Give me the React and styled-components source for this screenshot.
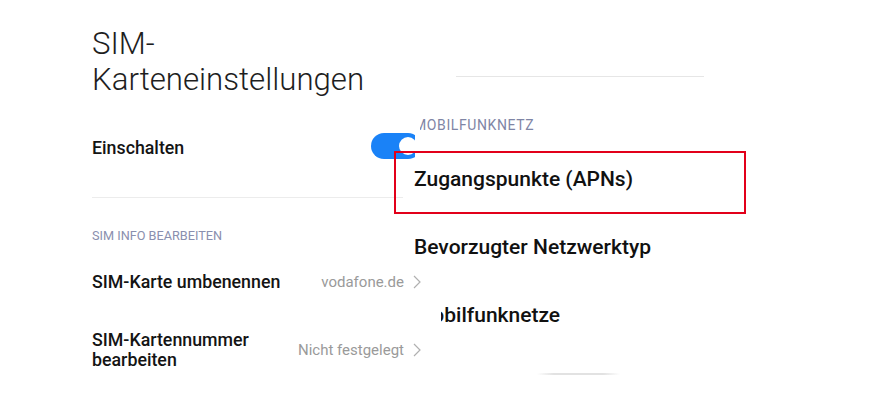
import React from "react";
import styled, { createGlobalStyle } from "styled-components";

const Global = createGlobalStyle`
  html, body { margin: 0; padding: 0; background: #fff; }
  body { font-family: Roboto, "Noto Sans", Arial, sans-serif; -webkit-font-smoothing: antialiased; }
  #root { width: 879px; height: 400px; }
`;

const Stage = styled.div`
  position: relative;
  width: 879px;
  height: 400px;
  overflow: hidden;
  background: #fff;
`;

const LeftScreen = styled.section`
  width: 329px;
  padding-left: 92px;
  display: flex;
  flex-direction: column;
`;

const Title = styled.h1`
  margin: 0;
  padding-top: 26px;
  font-size: 31.2px;
  line-height: 36px;
  font-weight: 300;
  color: #1e1e1e;
`;

const Row = styled.div`
  display: flex;
  align-items: center;
  justify-content: space-between;
  min-height: ${(p) => p.$h || 68}px;
  margin-top: ${(p) => p.$mt || 0}px;
`;

const Label = styled.div`
  font-size: 17.8px;
  line-height: 20px;
  font-weight: 500;
  color: #141414;
  padding-top: ${(p) => p.$pt || 0}px;
`;

const Toggle = styled.div`
  width: 50px;
  height: 26px;
  border-radius: 13px;
  background: #1a82f7;
  display: flex;
  align-items: center;
  justify-content: flex-end;
  padding: 0 4px;
  box-sizing: border-box;
`;

const Knob = styled.div`
  width: 18px;
  height: 18px;
  border-radius: 50%;
  background: #fff;
`;

const Divider = styled.div`
  height: 1px;
  background: #ececec;
  margin-top: ${(p) => p.$mt || 0}px;
`;

const SectionHead = styled.div`
  font-size: ${(p) => p.$fs || 12.7}px;
  line-height: 16px;
  color: ${(p) => p.$color || "#8a8fae"};
  margin-top: ${(p) => p.$mt || 0}px;
  margin-bottom: ${(p) => p.$mb || 0}px;
  letter-spacing: ${(p) => p.$ls || 0}px;
`;

const Value = styled.div`
  display: flex;
  align-items: center;
  gap: 9px;
  font-size: 15px;
  color: #9a9a9a;
  white-space: nowrap;
`;

const Chevron = () => (
  <svg width="8" height="14" viewBox="0 0 8 14" fill="none">
    <polyline points="1,1 7,7 1,13" stroke="#b0b0b0" strokeWidth="1.2" />
  </svg>
);

const Overlay = styled.section`
  position: absolute;
  left: 403px;
  top: 60px;
  width: 476px;
  height: 340px;
  background: #fff;
  clip-path: polygon(
    17px 0, 17px 71px, 12px 73px, 12px 105px, 0 125px, 0 150px,
    8px 165px, 8px 210px, 38px 220px, 38px 340px, 476px 340px, 476px 0
  );
  display: flex;
  flex-direction: column;
  padding-left: 11px;
  box-sizing: border-box;
`;

const TopLine = styled.div`
  width: 248px;
  height: 1px;
  margin: 16px 0 0 42px;
  background: #e6e6e6;
`;

const Item = styled.div`
  display: flex;
  align-items: center;
  min-height: 68px;
  font-size: 21px;
  line-height: 24px;
  font-weight: 500;
  color: #111;
  white-space: nowrap;
`;

const FadeLine = styled.div`
  width: 83px;
  height: 2px;
  margin: 24px 0 0 123px;
  background: linear-gradient(90deg, rgba(220,220,220,0), #e2e2e2 20%, #e2e2e2 80%, rgba(220,220,220,0));
  filter: blur(0.4px);
`;

const Highlight = styled.div`
  position: absolute;
  left: 394px;
  top: 151px;
  width: 352px;
  height: 63px;
  box-sizing: border-box;
  border: 2px solid #e2001a;
  pointer-events: none;
`;

export default function App() {
  return (
    <>
      <Global />
      <Stage>
        <LeftScreen>
          <Title>
            SIM-
            <br />
            Karteneinstellungen
          </Title>
          <Row $h={52} $mt={22}>
            <Label $pt={4}>Einschalten</Label>
            <Toggle>
              <Knob />
            </Toggle>
          </Row>
          <Divider $mt={25} />
          <SectionHead $mt={30}>SIM INFO BEARBEITEN</SectionHead>
          <Row $mt={4}>
            <Label>SIM-Karte umbenennen</Label>
            <Value>
              vodafone.de
              <Chevron />
            </Value>
          </Row>
          <Row>
            <Label>
              SIM-Kartennummer
              <br />
              bearbeiten
            </Label>
            <Value>
              Nicht festgelegt
              <Chevron />
            </Value>
          </Row>
        </LeftScreen>
        <Overlay>
          <TopLine />
          <SectionHead $mt={40} $mb={12} $ls={0.6} $fs={14} $color="#7f85a5">
            MOBILFUNKNETZ
          </SectionHead>
          <Item>Zugangspunkte (APNs)</Item>
          <Item>Bevorzugter Netzwerktyp</Item>
          <Item>Mobilfunknetze</Item>
          <FadeLine />
        </Overlay>
        <Highlight />
      </Stage>
    </>
  );
}
